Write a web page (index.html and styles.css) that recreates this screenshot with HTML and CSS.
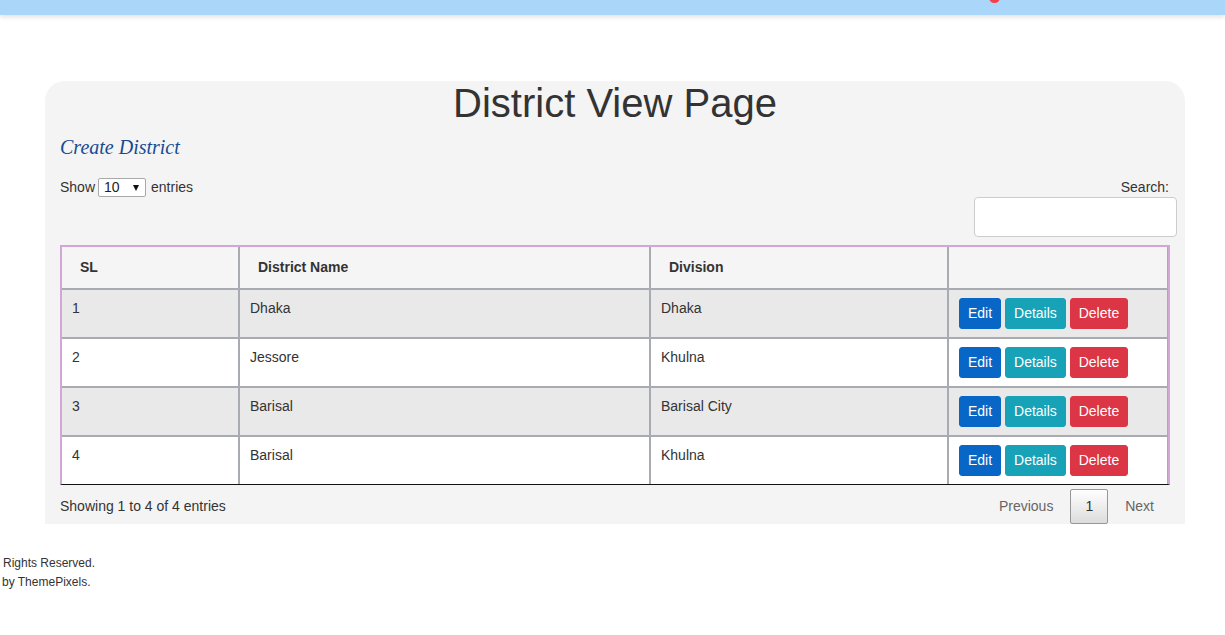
FILE: index.html
```html
<!DOCTYPE html>
<html lang="en">
<head>
<meta charset="utf-8">
<title>District View Page</title>
<link rel="stylesheet" href="styles.css">
</head>
<body>
<header class="topbar"><span class="badge"></span></header>
<main class="page">
  <section class="card">
    <h1 class="title">District View Page</h1>
    <a class="create" href="#">Create District</a>
    <div class="controls">
      <label class="length">Show
        <span class="select-wrap"><select class="select"><option>10</option><option>25</option><option>50</option></select></span>
        entries</label>
      <div class="search">
        <label class="search-label">Search:</label>
        <input class="search-input" type="search">
      </div>
    </div>
    <table class="data">
      <colgroup>
        <col class="c1"><col class="c2"><col class="c3"><col class="c4">
      </colgroup>
      <thead>
        <tr><th>SL</th><th>District Name</th><th>Division</th><th></th></tr>
      </thead>
      <tbody>
        <tr class="odd"><td>1</td><td>Dhaka</td><td>Dhaka</td><td class="actions"><a class="btn edit">Edit</a> <a class="btn details">Details</a> <a class="btn delete">Delete</a></td></tr>
        <tr class="even"><td>2</td><td>Jessore</td><td>Khulna</td><td class="actions"><a class="btn edit">Edit</a> <a class="btn details">Details</a> <a class="btn delete">Delete</a></td></tr>
        <tr class="odd"><td>3</td><td>Barisal</td><td>Barisal City</td><td class="actions"><a class="btn edit">Edit</a> <a class="btn details">Details</a> <a class="btn delete">Delete</a></td></tr>
        <tr class="even"><td>4</td><td>Barisal</td><td>Khulna</td><td class="actions"><a class="btn edit">Edit</a> <a class="btn details">Details</a> <a class="btn delete">Delete</a></td></tr>
      </tbody>
    </table>
    <div class="table-foot">
      <div class="info">Showing 1 to 4 of 4 entries</div>
      <div class="paginate">
        <a class="pg disabled">Previous</a><a class="pg current">1</a><a class="pg disabled">Next</a>
      </div>
    </div>
  </section>
</main>
<footer class="site-foot">
  <div>Rights Reserved.</div>
  <div class="by">by ThemePixels.</div>
</footer>
</body>
</html>
```

FILE: styles.css
```css
* { box-sizing: border-box; }
html, body { margin: 0; padding: 0; background: #fff; }
body {
  font-family: "Liberation Sans", Arial, sans-serif;
  font-size: 14px;
  line-height: 20px;
  color: #333;
}

.topbar {
  position: relative;
  height: 15px;
  background: #aad6f9;
  box-shadow: 0 2px 5px rgba(0, 0, 0, 0.12);
}
.badge {
  position: absolute;
  left: 989px;
  top: -8px;
  width: 11px;
  height: 11px;
  border-radius: 50%;
  background: #f0424a;
}

.page { padding: 66px 0 0 45px; }

.card {
  width: 1140px;
  background: #f4f4f4;
  border-radius: 20px 20px 0 0;
  padding: 0 15px;
}

.title {
  margin: 0;
  font-size: 40px;
  font-weight: 400;
  line-height: 44px;
  text-align: center;
  color: #333;
}

.create {
  display: block;
  margin: 11px 0 18px;
  font-family: "Liberation Serif", "Times New Roman", serif;
  font-style: italic;
  font-size: 20px;
  line-height: 23px;
  color: #164b93;
  text-decoration: none;
}

.controls {
  display: flex;
  justify-content: space-between;
  align-items: flex-start;
}
.length { display: flex; align-items: center; height: 20px; }
.select-wrap {
  position: relative;
  display: inline-block;
  margin: 0 5px 0 3px;
}
.select {
  appearance: none;
  -webkit-appearance: none;
  width: 48px;
  height: 19px;
  border: 1px solid #a9a9a9;
  border-radius: 2px;
  background: #fff;
  font-family: "Liberation Sans", Arial, sans-serif;
  font-size: 14px;
  color: #222;
  padding: 0 0 0 5px;
  line-height: 17px;
  display: block;
}
.select-wrap::after {
  content: "";
  position: absolute;
  right: 7px;
  top: 7px;
  border-left: 3.5px solid transparent;
  border-right: 3.5px solid transparent;
  border-top: 6px solid #111;
  pointer-events: none;
}

.search { text-align: right; }
.search-label { display: block; line-height: 20px; padding-right: 1px; }
.search-input {
  display: block;
  width: 203px;
  height: 40px;
  margin-right: -7px;
  border: 1px solid #ccc;
  border-radius: 4px;
  background: #fff;
}

.data {
  width: 1110px;
  margin-top: 8px;
  table-layout: fixed;
  border-collapse: separate;
  border-spacing: 0;
  border: 2px solid #d2a6d6;
  border-bottom: 1px solid #111;
}
.c1 { width: 178px; }
.c2 { width: 411px; }
.c3 { width: 298px; }

.data th, .data td {
  border-right: 2px solid #a9abb2;
  border-bottom: 2px solid #a9abb2;
  text-align: left;
  vertical-align: top;
}
.data th:last-child, .data td:last-child { border-right: 1px solid #a9abb2; }
.data tbody tr:last-child td { border-bottom: 0; }

.data th {
  padding: 10px 18px;
  line-height: 21px;
  font-weight: 700;
  background: #f5f5f5;
}
.data td {
  padding: 8px 10px 9px;
  line-height: 21px;
}
.data td.actions { padding: 8px 10px; }
.odd td { background: #e9e9e9; }
.even td { background: #fff; }

.btn {
  display: inline-block;
  padding: 4px 8px;
  font-size: 14px;
  line-height: 21px;
  color: #fff;
  border: 1px solid transparent;
  border-radius: 3px;
  text-decoration: none;
}
.edit { background: #0866c6; border-color: #0866c6; }
.details { background: #17a2b8; border-color: #17a2b8; }
.delete { background: #dc3545; border-color: #dc3545; }

.table-foot {
  display: flex;
  justify-content: space-between;
  align-items: flex-start;
}
.info { padding-top: 11px; }
.paginate { display: flex; padding-top: 4px; margin-right: 1px; }
.pg {
  display: block;
  padding: 7px 14px;
  line-height: 19px;
  border: 1px solid transparent;
  border-radius: 2px;
  margin-left: 2px;
  color: #333;
}
.pg.disabled { color: #666; }
.pg.current {
  border-color: #979797;
  background: linear-gradient(to bottom, #fff 0%, #dcdcdc 100%);
}

.site-foot {
  padding: 30px 0 0 3px;
  font-size: 12px;
  line-height: 19px;
  color: #333;
}
.site-foot .by { margin-left: -1px; }
```
